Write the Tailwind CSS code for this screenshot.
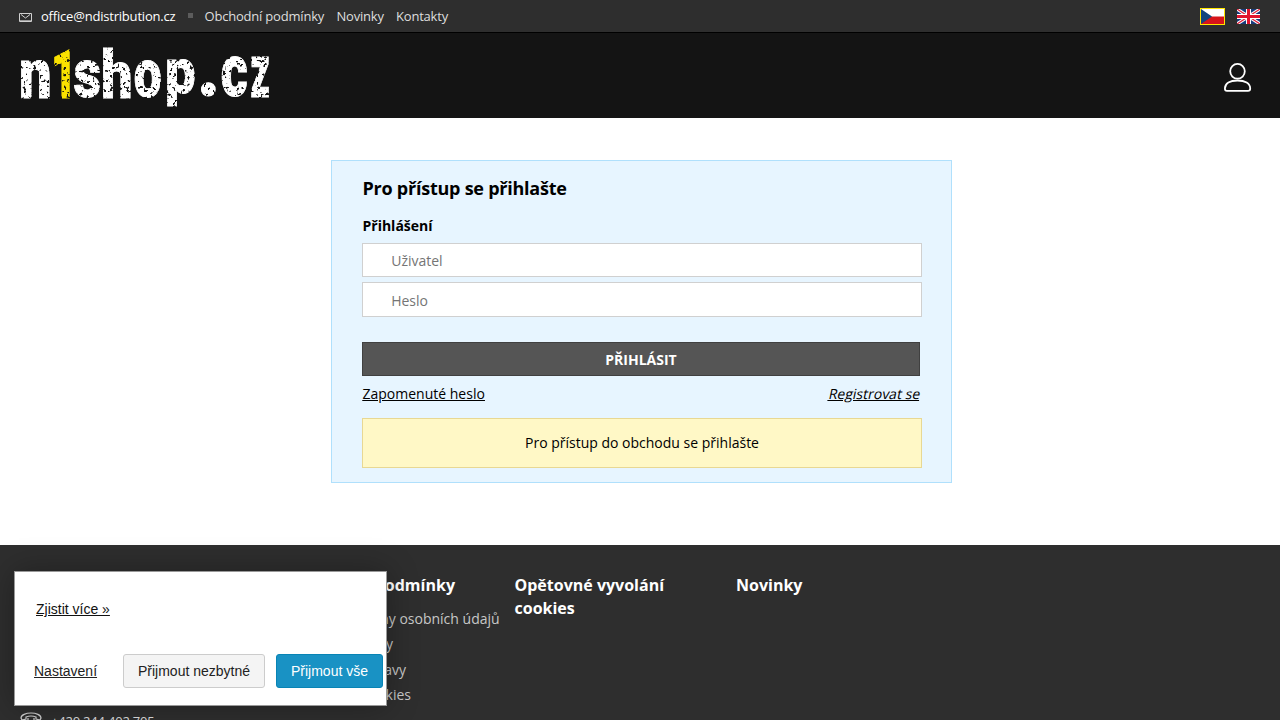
<!DOCTYPE html>
<html lang="cs">
<head>
<meta charset="utf-8">
<title>n1shop.cz</title>
<script src="https://cdn.jsdelivr.net/npm/@tailwindcss/browser@4"></script>
</head>
<body class="relative h-[720px] w-[1280px] overflow-hidden bg-white font-['Open_Sans',sans-serif] text-sm text-black">
<div class="flex h-[33px] items-center justify-between border-b border-black bg-[#2e2e2e] pr-5 pl-[19px] text-[13px] text-[#dedede]">
  <div class="flex items-center">
    <svg class="mt-[2px] h-[9px] w-[13px]" viewBox="0 0 13 9" fill="none" stroke="#d0d0d0"><path d="M.5 .5h12v8H.5zM2 1.500l4.500 3.500L11 1.500"/><path stroke="#999" d="M1 7.500h11"/></svg>
    <a class="ml-[9px] w-[147px] tracking-[-0.2px] text-white">office@ndistribution.cz</a>
    <span class="mr-[11.500px] -mt-px size-[5px] bg-[#5c5c5c]"></span>
    <nav class="flex tracking-[-0.2px]"><a class="w-[132px]">Obchodní podmínky</a><a class="w-[59.500px]">Novinky</a><a>Kontakty</a></nav>
  </div>
  <div class="flex items-center gap-3">
    <svg class="h-[17px] w-[25px]" viewBox="0 0 25 17"><path fill="#ffe600" d="M0 0h25v17H0z"/><path fill="#fff" d="M1 1h23v8H1z"/><path fill="#d7141a" d="M1 8.500h23V16H1z"/><path fill="#11457e" d="M1 1l11 7.500L1 16z"/></svg>
    <svg class="h-[15px] w-[23px]" viewBox="0 0 23 15"><path fill="#183a7c" d="M0 0h23v15H0z"/><path stroke="#fff" stroke-width="3.200" d="M0 0l23 15M23 0L0 15"/><path stroke="#e0203a" stroke-width="1.200" d="M0 0l23 15M23 0L0 15"/><path stroke="#fff" stroke-width="5" d="M11.500 0v15M0 7.500h23"/><path stroke="#e0142f" stroke-width="3" d="M11.500 0v15M0 7.500h23"/></svg>
  </div>
</div>
<header class="flex h-[85px] justify-between bg-[#141414] pr-7 pl-5">
  <svg class="mt-3 h-[64px] w-[252px]" viewBox="20 45 252 64" role="img" aria-label="n1shop.cz">
    <defs>
      <filter id="grunge" x="-5%" y="-5%" width="110%" height="110%" color-interpolation-filters="sRGB">
        <feTurbulence type="fractalNoise" baseFrequency="0.3" numOctaves="2" seed="8" result="n"/>
        <feColorMatrix in="n" type="matrix" values="0 0 0 0 0  0 0 0 0 0  0 0 0 0 0  -12 0 0 0 8.300" result="m"/>
        <feComposite in="SourceGraphic" in2="m" operator="in"/>
      </filter>
    </defs>
    <g id="logo" filter="url(#grunge)" fill="#fff" stroke="#fff" stroke-width="1" font-family="Roboto" font-weight="900" font-size="70">
      <text data-box="21 59 29 39">n</text>
      <text data-box="54 50 16 48" fill="#fae100" stroke="#fae100">1</text>
      <text data-box="74 59 26 39">s</text>
      <text data-box="103 47 28 51">h</text>
      <text data-box="134 59 27 39">o</text>
      <text data-box="167 59 28 47">p</text>
      <text data-box="201 82 15 16">.</text>
      <text data-box="221 56 26 42">c</text>
      <text data-box="251 57 18 41">z</text>
    </g>
  </svg>
  <svg class="mt-[29px] h-[31px] w-[30px]" viewBox="0 0 30 31" fill="none" stroke="#fff" stroke-width="1.800"><ellipse cx="15.500" cy="9.300" rx="7.300" ry="7.400"/><path d="M2.900 26.500C2.900 21.300 8 18.500 15.500 18.500S28.200 21.300 28.200 26.500Q28.200 28.900 26 28.900H5Q2.900 28.900 2.900 26.500z"/></svg>
</header>
<main class="h-[427px] pt-[42px] pl-[331px]">
  <section class="h-[323px] w-[621px] border border-[#b0e0fc] bg-[#e7f5ff] px-[30px] pt-[14px]">
    <h1 class="pl-[0.5px] text-lg leading-[26px] font-bold tracking-[-0.24px]">Pro přístup se přihlašte</h1>
    <h2 class="mt-[15px] pl-[0.5px] leading-5 font-bold">Přihlášení</h2>
    <input class="mt-[7px] block h-[34px] w-[560px] border border-[#d0d0d0] bg-white pt-px pl-[28.2px] placeholder:text-[#757575]" placeholder="Uživatel">
    <input class="mt-[5px] block h-[35px] w-[560px] border border-[#d0d0d0] bg-white pt-px pl-[28.2px] placeholder:text-[#757575]" placeholder="Heslo" type="password">
    <button class="mt-[25px] block h-[34px] w-[558px] border border-[#404040] bg-[#555] pt-[2px] font-bold text-white">PŘIHLÁSIT</button>
    <div class="mt-2 flex w-[558px] justify-between leading-5 underline"><a class="pl-[0.5px]">Zapomenuté heslo</a><a class="-mr-[0.5px] -skew-x-12">Registrovat se</a></div>
    <p class="mt-[14px] flex h-[50px] w-[560px] items-center justify-center border border-[#e8d893] bg-[#fff8c6]">Pro přístup do obchodu se přihlašte</p>
  </section>
</main>
<footer class="grid h-[175px] grid-cols-[273.5px_221px_221.5px_221.5px] bg-[#2e2e2e] pt-[29px] pl-5 text-base leading-[23px] font-bold text-white">
  <div class="flex pt-[136px] text-[13px] font-normal leading-[22px] tracking-[-0.2px] text-[#dedede]">
    <svg class="mt-[2px] h-[18px] w-[22px]" viewBox="0 0 22 18" fill="none" stroke="#d0d0d0" stroke-width="1.200"><path d="M1 6C1 3 6 1 11 1s10 2 10 5l-1 2-4-1V5Q11 3 6 5v2L2 8zM8 6v2l-5 6v3h16v-3l-5-6V6"/><circle cx="11" cy="12" r="3"/></svg>
    <span class="ml-[9px]">+420 244 402 705</span>
  </div>
  <div><h3 class="whitespace-nowrap">Obchodní podmínky</h3>
    <ul class="mt-[9px] whitespace-nowrap text-sm leading-[25.300px] font-normal text-[#c8c8c8]"><li>Zásady ochrany osobních údajů</li><li class="w-[99.5px] text-right">Záruky a vady</li><li class="w-[112.5px] text-right">Způsoby dopravy</li><li class="w-[117.5px] text-right">Soubory cookies</li></ul></div>
  <h3 class="w-[180px]">Opětovné vyvolání cookies</h3>
  <h3>Novinky</h3>
</footer>
<aside class="absolute top-[571px] left-[14px] h-[135px] w-[373px] border border-[#999] bg-white pt-[27px] font-['Liberation_Sans',sans-serif] text-sm text-[#222] shadow-[0_0_30px_rgba(0,0,0,0.3)]">
  <a class="ml-[21px] block leading-5 text-[#111] underline">Zjistit více »</a>
  <div class="mt-[35px] flex items-center pl-[19px]">
    <a class="w-[89px] underline">Nastavení</a>
    <button class="h-[34px] w-[142px] rounded-[3px] border border-[#ccc] bg-[#f4f4f4]">Přijmout nezbytné</button>
    <button class="ml-[11px] h-[34px] w-[107px] rounded-[3px] border border-[#0884b5] bg-[#1992c4] text-white">Přijmout vše</button>
  </div>
</aside>
<script>
// Fit each logo letter's visible ink into its box (x, y, width, height).
const ctx = document.createElement('canvas').getContext('2d');
ctx.font = '900 70px Roboto';
for (const t of document.querySelectorAll('#logo text')) {
  const [x, y, w, h] = t.dataset.box.split(' ').map(Number);
  const m = ctx.measureText(t.textContent);
  const iw = m.actualBoundingBoxRight + m.actualBoundingBoxLeft;
  const ih = m.actualBoundingBoxAscent + m.actualBoundingBoxDescent;
  const sx = w / (iw + 1), sy = h / (ih + 1);
  t.setAttribute('transform', `translate(${x + (m.actualBoundingBoxLeft + 0.5) * sx} ${y + (m.actualBoundingBoxAscent + 0.5) * sy}) scale(${sx} ${sy})`);
}
</script>
</body>
</html>
